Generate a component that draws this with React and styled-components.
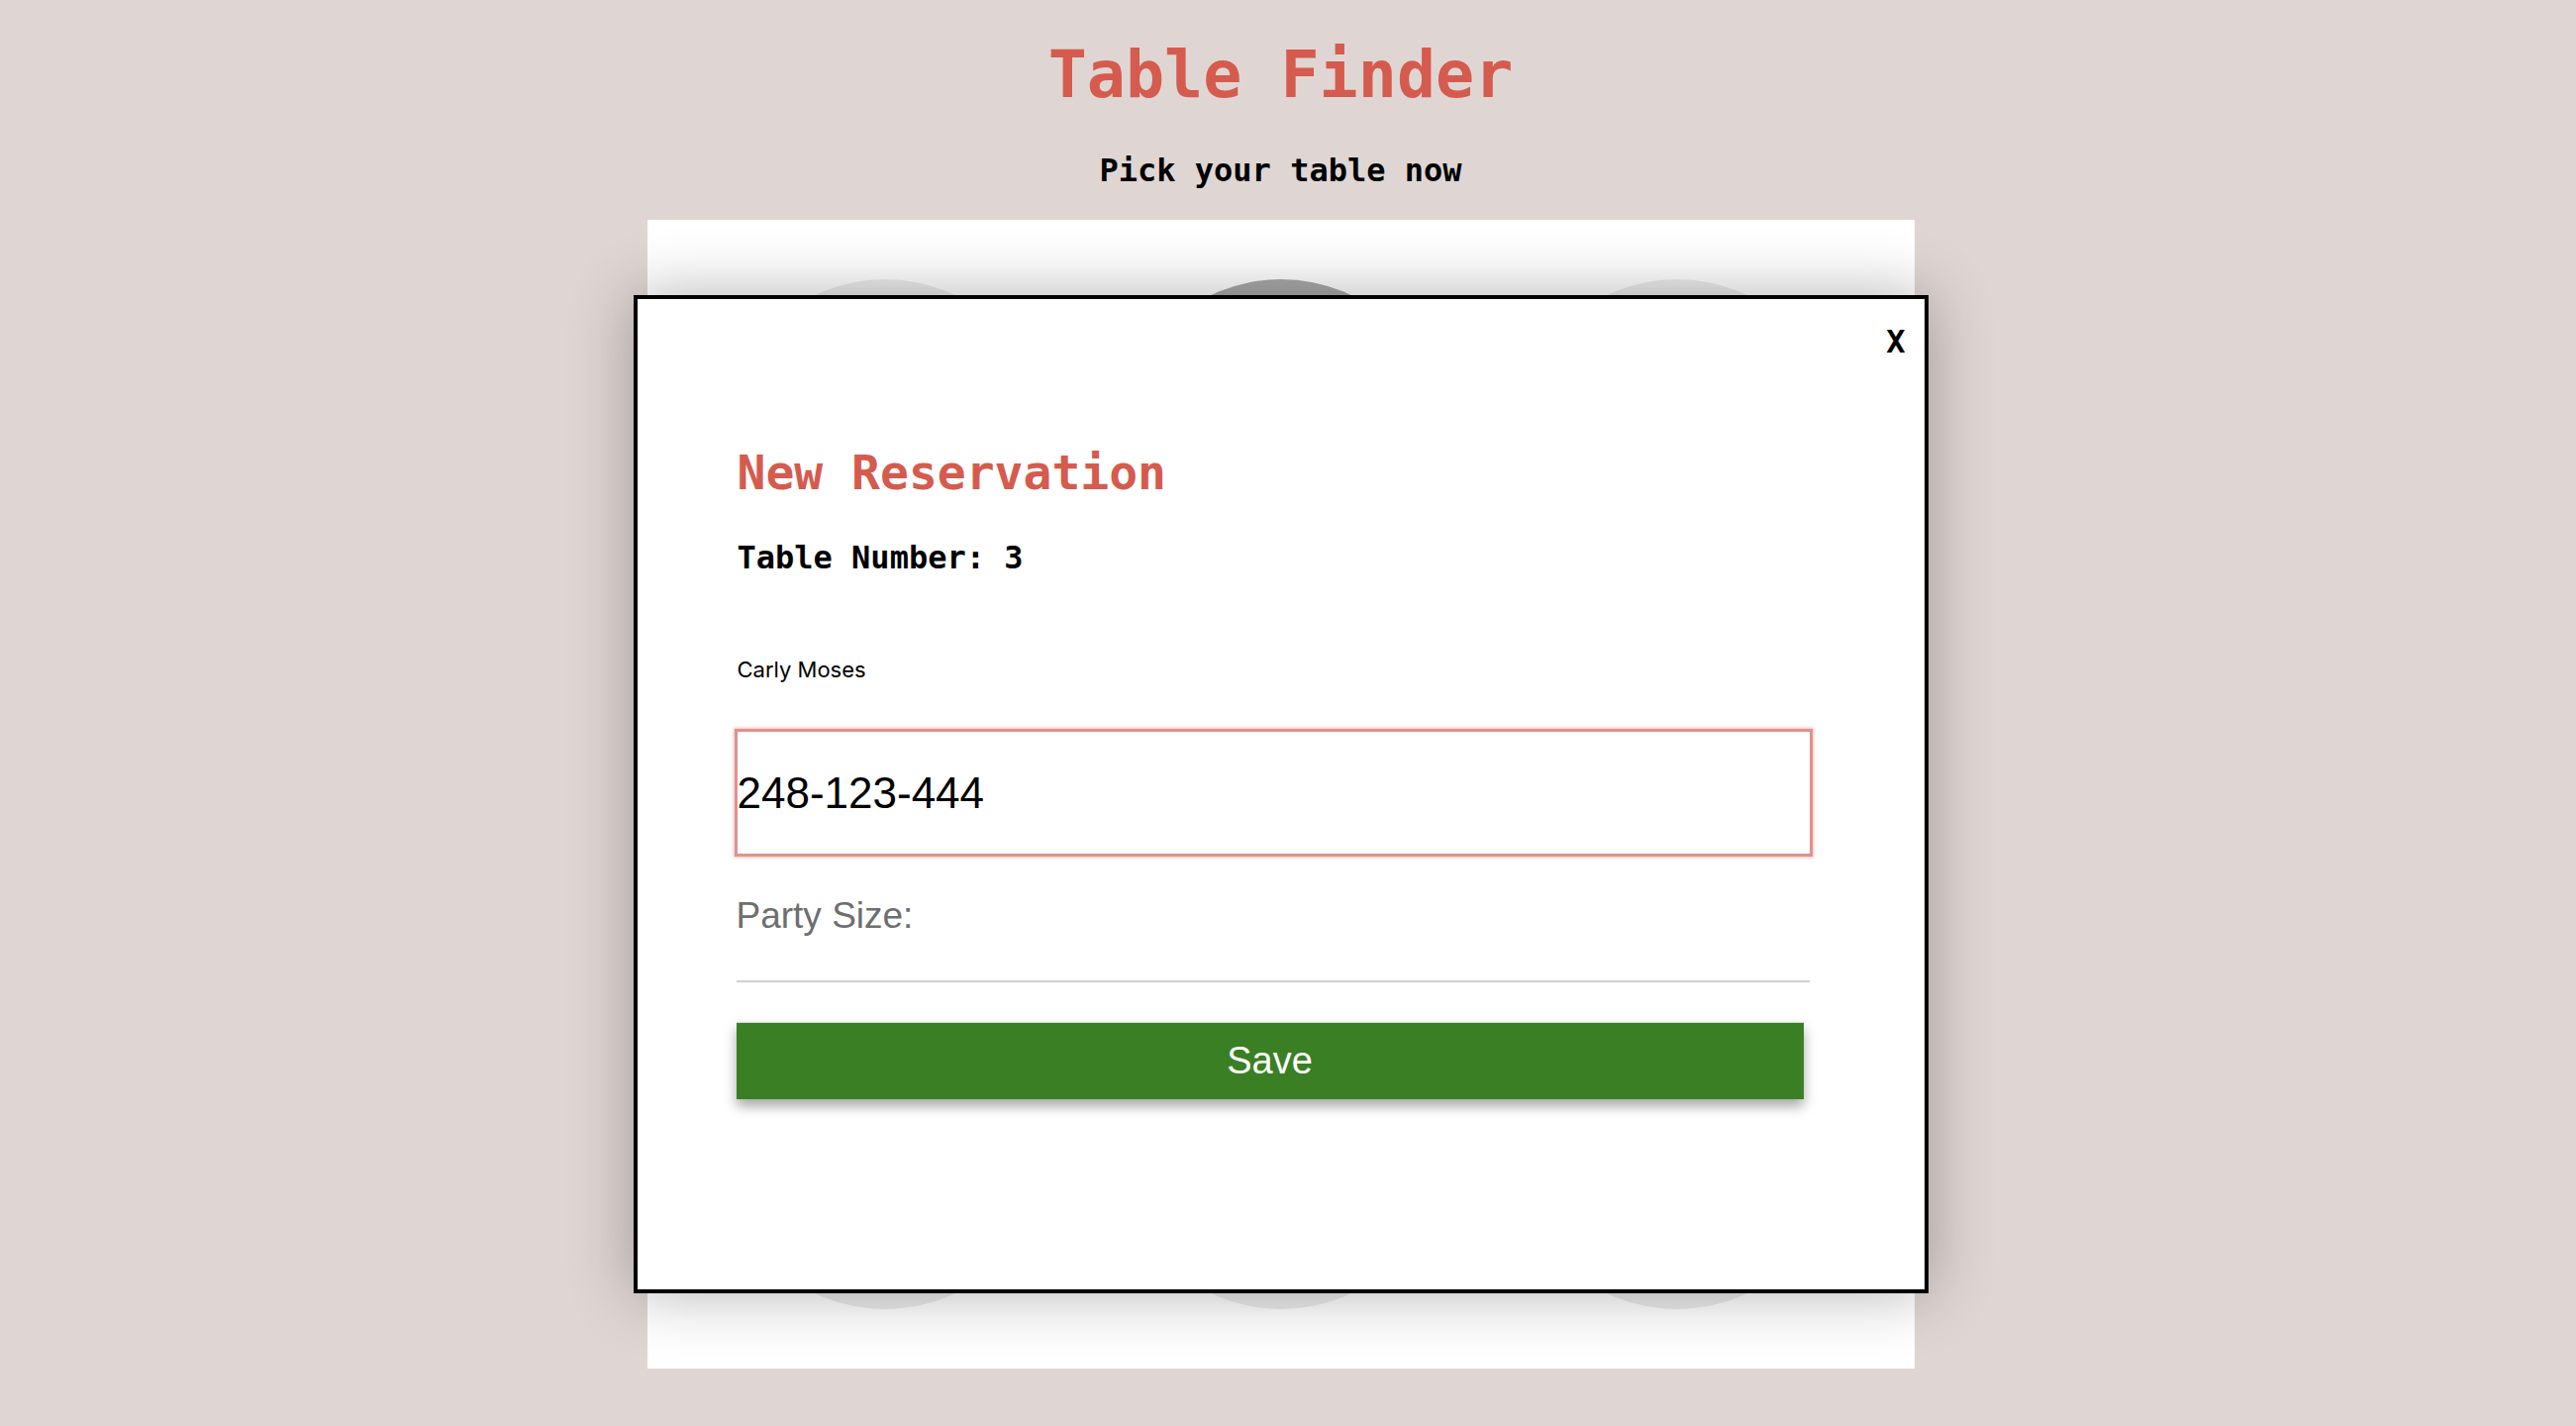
import React from 'react'
import styled, { createGlobalStyle } from 'styled-components'

const GlobalStyle = createGlobalStyle`
  html, body {
    margin: 0;
    padding: 0;
    background-color: #dfd6d3;
  }

  * {
    box-sizing: border-box;
  }
`

const Page = styled.div`
  min-height: 1440px;
  padding: 43px 15px 0 0;
  display: flex;
  flex-direction: column;
  align-items: center;
  font-family: 'DejaVu Sans Mono', monospace;
`

const Title = styled.h1`
  margin: 0;
  font-size: 65px;
  line-height: 1;
  font-weight: bold;
  color: #d55b4e;
`

const Subtitle = styled.h3`
  margin: 48px 0 0 0;
  font-size: 32px;
  line-height: 1;
  font-weight: bold;
  color: #000;
`

const FloorWrap = styled.div`
  position: relative;
  margin-top: 34px;
  width: 1280px;
`

const Floor = styled.div`
  padding: 60px 0 60px 0;
  display: grid;
  grid-template-columns: repeat(3, 330px);
  justify-content: center;
  column-gap: 70px;
  row-gap: 25px;
  background-color: #fff;
`

const TableSpot = styled.div`
  width: 330px;
  height: 330px;
  border-radius: 50%;
  background-color: ${props => (props.$taken ? '#a9a9a9' : '#ececec')};
`

const Modal = styled.div`
  position: absolute;
  top: 76px;
  left: -14px;
  width: 1308px;
  height: 1008px;
  padding: 151px 113px 0 101px;
  display: flex;
  flex-direction: column;
  align-items: flex-start;
  border: 4px solid #000;
  background-color: #fff;
  box-shadow: 0 0 60px rgba(0, 0, 0, 0.3);
`

const Close = styled.span`
  position: absolute;
  top: 27px;
  right: 19px;
  font-family: 'DejaVu Sans Mono', monospace;
  font-size: 32px;
  line-height: 1;
  font-weight: bold;
  color: #000;
  cursor: pointer;
`

const ModalTitle = styled.h2`
  margin: 0;
  font-size: 48px;
  line-height: 1;
  font-weight: bold;
  color: #d55b4e;
`

const TableNumber = styled.h4`
  margin: 46px 0 0 0;
  font-size: 32px;
  line-height: 1;
  font-weight: bold;
  color: #000;
`

const GuestName = styled.label`
  margin: 86px 0 0 0;
  font-family: Inter, 'Liberation Sans', sans-serif;
  font-size: 22px;
  line-height: 1;
  color: #000;
`

const PhoneInput = styled.input`
  margin: 49px 0 0 -3px;
  width: calc(100% + 3px);
  height: 129px;
  padding: 0;
  border: 3px solid #e0928b;
  box-shadow: 0 0 3px 1px rgba(220, 120, 110, 0.45);
  font-family: 'Liberation Sans', Arial, sans-serif;
  font-size: 44px;
  color: #000;
  background: #fff;
  outline: none;
`

const PartyInput = styled.input`
  margin: 41px 0 0 -1px;
  width: 1084px;
  height: 86px;
  padding: 0 0 47px 0;
  border: none;
  border-bottom: 2px solid #cfcfcf;
  font-family: 'Liberation Sans', Arial, sans-serif;
  font-size: 37px;
  line-height: 37px;
  color: #000;
  background: transparent;
  outline: none;

  &::placeholder {
    color: #6e6e6e;
  }
`

const SaveButton = styled.button`
  margin: 40px 0 0 -1px;
  width: 1078px;
  height: 78px;
  border: none;
  border-top: 1px solid #d6d6d6;
  background-color: #3a7f24;
  color: #fff;
  font-family: 'Liberation Sans', Arial, sans-serif;
  font-size: 38px;
  box-shadow: 0 7px 12px rgba(0, 0, 0, 0.35);
  cursor: pointer;
`

const tables = [1, 2, 3, 4, 5, 6, 7, 8, 9]

export default function App() {
  return (
    <>
      <GlobalStyle />
      <Page>
        <Title>Table Finder</Title>
        <Subtitle>Pick your table now</Subtitle>
        <FloorWrap>
          <Floor>
            {tables.map(n => (
              <TableSpot key={n} $taken={n === 2} />
            ))}
          </Floor>
          <Modal>
            <Close>X</Close>
            <ModalTitle>New Reservation</ModalTitle>
            <TableNumber>Table Number: 3</TableNumber>
            <GuestName>Carly Moses</GuestName>
            <PhoneInput defaultValue='248-123-444' />
            <PartyInput placeholder='Party Size:' />
            <SaveButton>Save</SaveButton>
          </Modal>
        </FloorWrap>
      </Page>
    </>
  )
}
